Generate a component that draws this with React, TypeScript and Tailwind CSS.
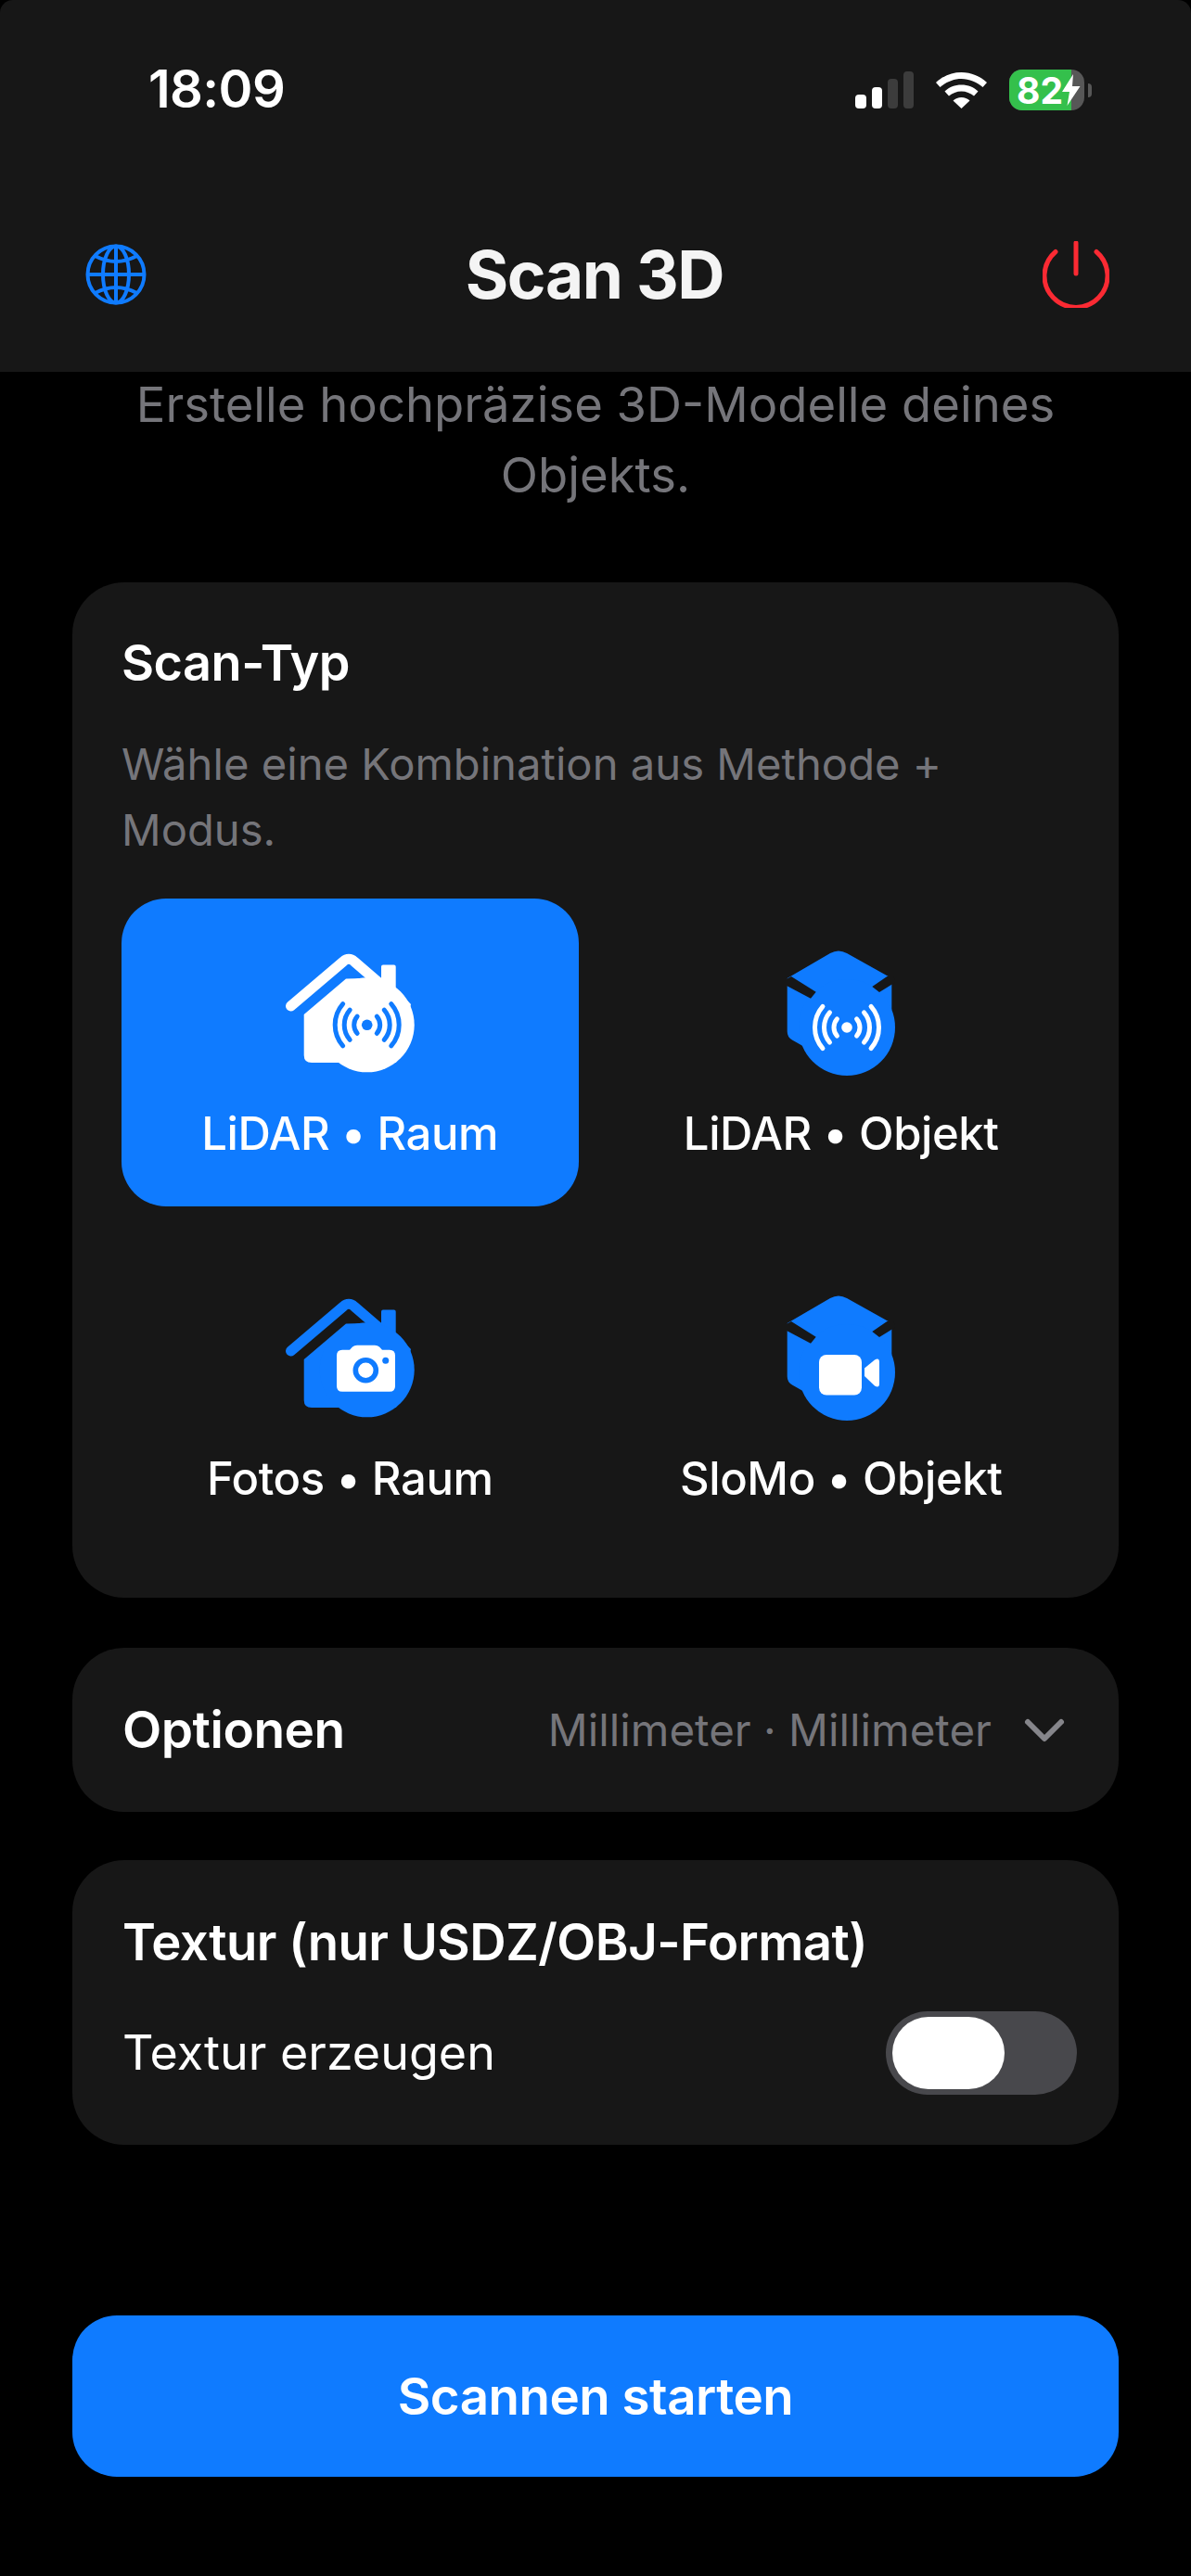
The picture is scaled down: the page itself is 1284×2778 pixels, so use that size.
import { ChevronDown } from "lucide-react";

const BLUE = "#0f7bff";

// Concentric broadcast arcs around a dot, left and right of (cx, cy)
const SignalWaves = ({ cx, cy, color }: { cx: number; cy: number; color: string }) => {
    const arcs = [14, 24.5, 34.5].flatMap((r) => {
        const dx = r * 0.755;
        const dy = r * 0.656;
        return [
            `M${cx - dx} ${cy - dy}A${r} ${r} 0 0 0 ${cx - dx} ${cy + dy}`,
            `M${cx + dx} ${cy - dy}A${r} ${r} 0 0 1 ${cx + dx} ${cy + dy}`,
        ];
    });
    return (
        <g>
            <circle cx={cx} cy={cy} r={5.8} fill={color} />
            {arcs.map((d) => (
                <path key={d} d={d} fill="none" stroke={color} strokeWidth={5} strokeLinecap="round" />
            ))}
        </g>
    );
};

const HouseIcon = ({ color, children }: { color: string; children: React.ReactNode }) => (
    <svg width="140" height="130" viewBox="0 0 140 130">
        <path
            d="M6.5 57L63 9Q69 3.500 75 9L104 34"
            fill="none"
            stroke={color}
            strokeWidth={11}
            strokeLinecap="round"
            strokeLinejoin="round"
        />
        <path
            d="M20.7 66L66 27.5L84 27L104 30V14.5Q104 12.5 106 12.5H117.7Q119.7 12.5 119.7 14.5V38L136 55L120 118H29Q20.7 118 20.7 110Z"
            fill={color}
        />
        <circle cx={88.7} cy={77.3} r={51} fill={color} />
        {children}
    </svg>
);

const CubeIcon = ({ color, cut, children }: { color: string; cut: string; children: React.ReactNode }) => (
    <svg width="117" height="136" viewBox="0 0 117 136">
        <path
            d="M47 3Q56 -2 65 3L113.3 30V64L90 100L21 105L6 96.5Q0.7 93.5 0.7 87.3V30Z"
            fill={color}
        />
        <circle cx={65} cy={83} r={52} fill={color} />
        <polygon points="5,28 31.7,44.7 26,51.7 0,38 -2,32" fill={cut} />
        <polygon points="108.3,28 92.3,39 100,45 118,34 115,28" fill={cut} />
        {children}
    </svg>
);

const CameraGlyph = ({ color }: { color: string }) => (
    <g>
        <path
            d="M62 55.7H70L73 52.5Q75 50.7 78 50.7H97Q100 50.7 102 52.5L105 55.7H113Q119 55.7 119 61.7V94.7Q119 100.7 113 100.7H62Q56 100.7 56 94.7V61.7Q56 55.7 62 55.7Z"
            fill="#ffffff"
        />
        <circle cx={87.3} cy={77.7} r={11} fill="none" stroke={color} strokeWidth={5.6} />
        <circle cx={108.7} cy={67.3} r={3.5} fill={color} />
    </g>
);

const VideoGlyph = () => (
    <g fill="#ffffff">
        <rect x={35} y={64} width={46} height={43.5} rx={8} />
        <path d="M84 78.5L95 69.5Q100 66.5 100 72V95Q100 100.5 95 97.5L84 87Z" />
    </g>
);

const GlobeIcon = () => (
    <svg width="66" height="66" viewBox="0 0 66 66" fill="none" stroke={BLUE} strokeWidth={4}>
        <circle cx={33} cy={33} r={30.5} />
        <ellipse cx={33} cy={33} rx={14} ry={30.5} />
        <path d="M33 2.5V63.5M2.5 33H63.5" />
        <path d="M10.5 13Q33 25 55.5 13M10.5 53Q33 41 55.5 53" />
    </svg>
);

const PowerIcon = () => (
    <svg width="72" height="72" viewBox="0 0 72 72" fill="none" stroke="#fb2a33" strokeWidth={5} strokeLinecap="round">
        <path d="M36 2V35" />
        <path d="M14 11.5A34 34 0 1 0 58 11.5" />
    </svg>
);

const SignalBars = () => (
    <div className="flex items-end gap-[6px]">
        <div className="h-[15px] w-[12px] rounded-[4px] bg-white" />
        <div className="h-[23px] w-[11px] rounded-[4px] bg-white" />
        <div className="h-[32px] w-[11px] rounded-[4px] bg-[#3c3c3c]" />
        <div className="h-[40px] w-[11px] rounded-[4px] bg-[#3c3c3c]" />
    </div>
);

const WifiIcon = () => (
    <svg width="55" height="39" viewBox="0 0 55 39" fill="#ffffff">
        <path d="M27.5 0C38 0 47.5 4 55 11L50.5 16C44 10.5 36 7 27.5 7S11 10.5 4.5 16L0 11C7.5 4 17 0 27.5 0Z" />
        <path d="M27.5 13.5C34.5 13.5 41 16 45.5 20.5L41 25.5C37.5 22.5 32.5 20.5 27.5 20.5S17.5 22.5 14 25.5L9.5 20.5C14 16 20.5 13.5 27.5 13.5Z" />
        <path d="M27.5 27C31 27 34 28.3 36.5 30.5L27.5 39L18.5 30.5C21 28.3 24 27 27.5 27Z" />
    </svg>
);

const Battery = () => (
    <div className="flex items-center gap-[4px]">
        <div className="relative flex h-[44px] w-[81px] overflow-hidden rounded-[14px] bg-[#575757]">
            <div className="h-full w-[67px] bg-[#34c04c]" />
            <div className="absolute inset-0 flex items-center pl-[8px] text-[39px] font-bold leading-none text-white">
                82
                <svg width="20" height="34" viewBox="0 0 20 34" fill="#ffffff" className="ml-[-1px]">
                    <path d="M12 0L0 19H8L5.5 34L19.5 13H11Z" />
                </svg>
            </div>
        </div>
        <div className="h-[15px] w-[4px] rounded-r-[4px] bg-[#575757]" />
    </div>
);

type TileProps = {
    label: string;
    active?: boolean;
    icon: React.ReactNode;
};

const ScanTile = ({ label, active, icon }: TileProps) => (
    <div
        className={`flex h-[332px] flex-col items-center rounded-[48px] pt-[56px] ${active ? "bg-[#0f7bff]" : ""}`}
    >
        <div className="flex h-[136px] items-center justify-center">{icon}</div>
        <span className="mt-[34px] text-[49px] font-[550] leading-[56px] tracking-[-0.4px] text-white">
            {label}
        </span>
    </div>
);

export default function App() {
    return (
        <div className="flex h-[2778px] w-[1284px] flex-col overflow-hidden bg-black font-['Inter',sans-serif] text-white">
            <header className="h-[401px] shrink-0 rounded-t-[14px] bg-[#171717]">
                <div className="flex items-start pt-[73px] pr-[107px] pl-[160px]">
                    <span className="text-[56px] font-semibold leading-[46px] tracking-[-0.6px]">18:09</span>
                    <div className="ml-auto flex items-center gap-[24px] pt-[2px]">
                        <div className="flex items-center gap-[24px]">
                            <SignalBars />
                            <WifiIcon />
                        </div>
                        <Battery />
                    </div>
                </div>
                <div className="mt-[141px] flex items-center justify-between pr-[88px] pl-[92px]">
                    <GlobeIcon />
                    <h1 className="text-[71px] font-bold leading-[72px] tracking-[-1.4px] text-[#f4f4f4]">Scan 3D</h1>
                    <PowerIcon />
                </div>
            </header>

            <main className="flex flex-1 flex-col px-[78px]">
                <p className="mt-[-3px] text-center text-[52.6px] leading-[76px] text-[#75757a]">
                    Erstelle hochpräzise 3D-Modelle deines
                    <br />
                    Objekts.
                </p>

                <section className="mt-[78px] h-[1095px] rounded-[56px] bg-[#171717] px-[53px] pt-[54px]">
                    <h2 className="text-[54px] font-semibold leading-[66px] tracking-[-0.5px]">Scan-Typ</h2>
                    <p className="mt-[40px] text-[47.2px] leading-[71px] text-[#75757a]">
                        Wähle eine Kombination aus Methode +
                        <br />
                        Modus.
                    </p>
                    <div className="mt-[39px] grid grid-cols-2 gap-x-[37px] gap-y-[40px]">
                        <ScanTile
                            active
                            label="LiDAR • Raum"
                            icon={
                                <HouseIcon color="#ffffff">
                                    <SignalWaves cx={88.7} cy={77.3} color={BLUE} />
                                </HouseIcon>
                            }
                        />
                        <ScanTile
                            label="LiDAR • Objekt"
                            icon={
                                <CubeIcon color={BLUE} cut="#171717">
                                    <SignalWaves cx={65} cy={83} color="#ffffff" />
                                </CubeIcon>
                            }
                        />
                        <ScanTile
                            label="Fotos • Raum"
                            icon={
                                <HouseIcon color={BLUE}>
                                    <CameraGlyph color={BLUE} />
                                </HouseIcon>
                            }
                        />
                        <ScanTile
                            label="SloMo • Objekt"
                            icon={
                                <CubeIcon color={BLUE} cut="#171717">
                                    <VideoGlyph />
                                </CubeIcon>
                            }
                        />
                    </div>
                </section>

                <section className="mt-[54px] flex h-[177px] items-center rounded-[56px] bg-[#171717] pr-[44px] pl-[54px]">
                    <span className="text-[55px] font-semibold tracking-[-0.5px]">Optionen</span>
                    <span className="ml-auto text-[47.5px] text-[#75757a]">Millimeter · Millimeter</span>
                    <ChevronDown className="ml-[21px] h-[72px] w-[72px] text-[#86868b]" strokeWidth={2} />
                </section>

                <section className="mt-[52px] h-[307px] rounded-[56px] bg-[#171717] pt-[58px] pr-[45px] pl-[54px]">
                    <h2 className="text-[54.5px] font-semibold leading-[60px] tracking-[-0.5px]">
                        Textur (nur USDZ/OBJ-Format)
                    </h2>
                    <div className="mt-[45px] flex items-center justify-between">
                        <span className="text-[52px] leading-[90px]">Textur erzeugen</span>
                        <div className="flex h-[90px] w-[206px] items-center rounded-full bg-[#48484c] pl-[7px]">
                            <div className="h-[78px] w-[121px] rounded-[39px] bg-white" />
                        </div>
                    </div>
                </section>

                <button className="mt-[184px] h-[174px] rounded-[48px] bg-[#0f7bff] text-[54.7px] font-semibold tracking-[-0.5px] text-white">
                    Scannen starten
                </button>
            </main>
        </div>
    );
}
